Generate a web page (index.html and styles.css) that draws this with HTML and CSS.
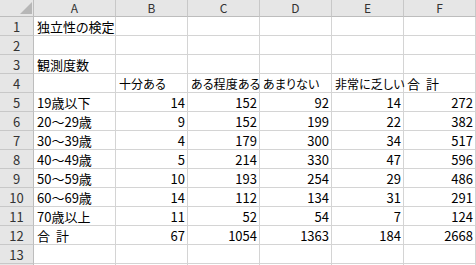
FILE: index.html
```html
<!DOCTYPE html>
<html lang="ja">
<head>
<meta charset="utf-8">
<title>独立性の検定</title>
<link rel="stylesheet" href="styles.css">
</head>
<body>
<div class="sheet">
  <div class="corner"><svg class="tri" width="12" height="12" viewBox="0 0 12 12"><polygon points="12,0 12,12 0,12" fill="#b7b7b7"/></svg></div>
  <div class="ch">A</div><div class="ch">B</div><div class="ch">C</div><div class="ch">D</div><div class="ch">E</div><div class="ch">F</div>

  <div class="rh">1</div><div class="c">独立性の検定</div><div class="c"></div><div class="c"></div><div class="c"></div><div class="c"></div><div class="c"></div>
  <div class="rh">2</div><div class="c"></div><div class="c"></div><div class="c"></div><div class="c"></div><div class="c"></div><div class="c"></div>
  <div class="rh">3</div><div class="c">観測度数</div><div class="c"></div><div class="c"></div><div class="c"></div><div class="c"></div><div class="c"></div>
  <div class="rh">4</div><div class="c"></div><div class="c lbl">十分ある</div><div class="c lbl">ある程度ある</div><div class="c lbl">あまりない</div><div class="c lbl">非常に乏しい</div><div class="c">合<span class="sp"> </span>計</div>
  <div class="rh">5</div><div class="c">19歳以下</div><div class="c n">14</div><div class="c n">152</div><div class="c n">92</div><div class="c n">14</div><div class="c n">272</div>
  <div class="rh">6</div><div class="c">20～29歳</div><div class="c n">9</div><div class="c n">152</div><div class="c n">199</div><div class="c n">22</div><div class="c n">382</div>
  <div class="rh">7</div><div class="c">30～39歳</div><div class="c n">4</div><div class="c n">179</div><div class="c n">300</div><div class="c n">34</div><div class="c n">517</div>
  <div class="rh">8</div><div class="c">40～49歳</div><div class="c n">5</div><div class="c n">214</div><div class="c n">330</div><div class="c n">47</div><div class="c n">596</div>
  <div class="rh">9</div><div class="c">50～59歳</div><div class="c n">10</div><div class="c n">193</div><div class="c n">254</div><div class="c n">29</div><div class="c n">486</div>
  <div class="rh">10</div><div class="c">60～69歳</div><div class="c n">14</div><div class="c n">112</div><div class="c n">134</div><div class="c n">31</div><div class="c n">291</div>
  <div class="rh">11</div><div class="c">70歳以上</div><div class="c n">11</div><div class="c n">52</div><div class="c n">54</div><div class="c n">7</div><div class="c n">124</div>
  <div class="rh">12</div><div class="c">合<span class="sp"> </span>計</div><div class="c n">67</div><div class="c n">1054</div><div class="c n">1363</div><div class="c n">184</div><div class="c n">2668</div>
  <div class="rh">13</div><div class="c"></div><div class="c"></div><div class="c"></div><div class="c"></div><div class="c"></div><div class="c"></div>
  <div class="rh last"></div><div class="c last"></div><div class="c last"></div><div class="c last"></div><div class="c last"></div><div class="c last"></div><div class="c last"></div>
</div>
</body>
</html>
```

FILE: styles.css
```css
html, body {
  margin: 0;
  padding: 0;
  background: #ffffff;
}
body {
  font-family: "Noto Sans CJK JP", "Noto Sans", sans-serif;
  font-size: 13px;
  color: #000;
  overflow: hidden;
  height: 265px;
}
.sheet {
  display: grid;
  grid-template-columns: 34px 82px 72px 72px 72px 72px 72px;
  grid-template-rows: 17px repeat(13, 19px) 1px;
  width: 476px;
  height: 265px;
}
.sheet > div {
  box-sizing: border-box;
  white-space: nowrap;
}
.corner {
  background: #e6e6e6;
  border-right: 1px solid #bdbdbd;
  border-bottom: 1px solid #bdbdbd;
  position: relative;
}
.tri {
  position: absolute;
  right: 1px;
  bottom: 2px;
}
.ch {
  background: #e6e6e6;
  color: #333;
  text-align: center;
  border-right: 1px solid #c8c8c8;
  border-bottom: 1px solid #bdbdbd;
  font-size: 12px;
  line-height: 16px;
}
.rh {
  background: #e6e6e6;
  color: #333;
  text-align: center;
  border-right: 1px solid #bdbdbd;
  border-bottom: 1px solid #c8c8c8;
  line-height: 16px;
  padding-top: 2px;
}
.c {
  border-right: 1px solid #d4d4d4;
  border-bottom: 1px solid #d4d4d4;
  line-height: 16px;
  padding: 2px 2px 0 3px;
  font-feature-settings: "palt";
}
.lbl {
  font-size: 12px;
  letter-spacing: 0.1px;
}
.last {
  padding: 0;
  border-bottom: 0;
}
.n {
  text-align: right;
  font-feature-settings: normal;
}
.sp {
  display: inline-block;
  width: 6px;
}
```
